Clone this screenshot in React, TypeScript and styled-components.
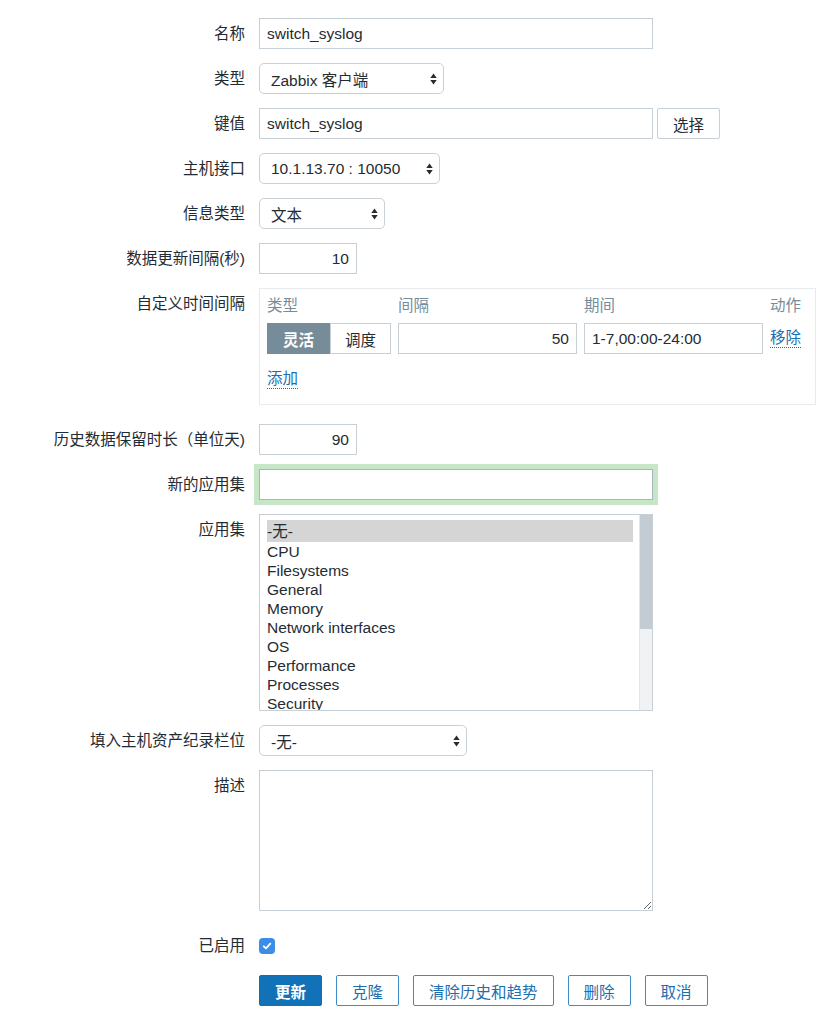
import React from 'react';
import styled, { createGlobalStyle } from 'styled-components';

const GlobalStyle = createGlobalStyle`
  html, body {
    margin: 0;
    padding: 0;
    background: #ffffff;
  }
  body {
    font-family: 'Liberation Sans', Arial, 'Noto Sans CJK SC', sans-serif;
    font-size: 15.5px;
    color: #1f2c33;
  }
  * {
    box-sizing: border-box;
  }
`;

const Form = styled.div`
  display: grid;
  grid-template-columns: 245px 1fr;
  column-gap: 14px;
  row-gap: 14px;
  align-items: start;
  padding-top: 18px;
`;

const Label = styled.div<{ $shift?: number }>`
  text-align: right;
  line-height: 31px;
  white-space: nowrap;
  margin-top: ${({ $shift }) => $shift ?? 0}px;
`;

const Field = styled.div<{ $shift?: number }>`
  display: flex;
  align-items: center;
  gap: 4px;
  min-height: 31px;
  margin-top: ${({ $shift }) => $shift ?? 0}px;
`;

const TextInput = styled.input<{ $width: number; $right?: boolean; $focus?: boolean }>`
  width: ${({ $width }) => $width}px;
  height: 31px;
  padding: 0 7px;
  border: 1px solid ${({ $focus }) => ($focus ? '#a9b6bf' : '#c6d0d6')};
  border-radius: 0;
  background: #ffffff;
  font: inherit;
  color: #1f2c33;
  text-align: ${({ $right }) => ($right ? 'right' : 'left')};
  outline: none;
  box-shadow: ${({ $focus }) => ($focus ? '0 0 0 5px #c7e5c7' : 'none')};
`;

const SelectBox = styled.div<{ $width: number }>`
  display: flex;
  align-items: center;
  justify-content: space-between;
  width: ${({ $width }) => $width}px;
  height: 31px;
  padding: 0 6px 0 11px;
  border: 1px solid #c9d1d6;
  border-radius: 5px;
  background: #ffffff;
  white-space: nowrap;
`;

const Button = styled.button<{ $primary?: boolean }>`
  height: 31px;
  padding: 0 15px;
  border: 1px solid ${({ $primary }) => ($primary ? '#0f70b7' : '#3d8cc8')};
  border-radius: 2px;
  background: ${({ $primary }) => ($primary ? '#1172b8' : '#ffffff')};
  color: ${({ $primary }) => ($primary ? '#ffffff' : '#1c6fae')};
  font: inherit;
  font-weight: ${({ $primary }) => ($primary ? 700 : 400)};
  white-space: nowrap;
  cursor: pointer;
`;

const PlainButton = styled.button`
  height: 31px;
  padding: 0 15px;
  border: 1px solid #c6d0d6;
  border-radius: 2px;
  background: #ffffff;
  color: #1f2c33;
  font: inherit;
  white-space: nowrap;
`;

const IntervalBox = styled.div`
  width: 557px;
  padding: 8px 7px 15px 7px;
  border: 1px solid #e7ebee;
  margin-bottom: 5px;
`;

const IntervalGrid = styled.div`
  display: grid;
  grid-template-columns: 124px 179px 179px auto;
  column-gap: 7px;
  row-gap: 8px;
  align-items: center;
`;

const HeadCell = styled.div`
  line-height: 18px;
  color: #768d99;
  white-space: nowrap;
`;

const Toggle = styled.div`
  display: flex;
  height: 31px;
`;

const ToggleItem = styled.div<{ $active?: boolean; $width: number }>`
  display: flex;
  align-items: center;
  justify-content: center;
  width: ${({ $width }) => $width}px;
  border: 1px solid ${({ $active }) => ($active ? '#768d99' : '#c6d0d6')};
  background: ${({ $active }) => ($active ? '#768d99' : '#ffffff')};
  color: ${({ $active }) => ($active ? '#ffffff' : '#1f2c33')};
  font-weight: ${({ $active }) => ($active ? 700 : 400)};
`;

const DottedLink = styled.a`
  display: inline-block;
  line-height: 18px;
  color: #1c6fae;
  text-decoration: none;
  border-bottom: 1px dotted #1c6fae;
  white-space: nowrap;
  justify-self: start;
`;

const AddRow = styled.div`
  margin-top: 16px;
`;

const ListBox = styled.div`
  display: flex;
  width: 394px;
  height: 197px;
  border: 1px solid #c6d0d6;
  background: #ffffff;
  overflow: hidden;
`;

const ListItems = styled.div`
  flex: 1;
  padding: 5px 6px 0 7px;
`;

const ListItem = styled.div<{ $selected?: boolean }>`
  line-height: 19px;
  padding: ${({ $selected }) => ($selected ? '2px 0 1px' : '0')};
  background: ${({ $selected }) => ($selected ? '#d5d5d5' : 'transparent')};
  white-space: nowrap;
`;

const ScrollTrack = styled.div`
  width: 13px;
  background: #f0f2f3;
  border-left: 1px solid #e2e6e8;
`;

const ScrollThumb = styled.div`
  height: 114px;
  background: #c3ccd2;
`;

const TextArea = styled.textarea`
  width: 394px;
  height: 141px;
  border: 1px solid #c6d0d6;
  border-radius: 0;
  font: inherit;
  resize: both;
  outline: none;
`;

const CheckBox = styled.span`
  display: inline-flex;
  align-items: center;
  justify-content: center;
  width: 16px;
  height: 16px;
  border-radius: 4px;
  background: #3a8ee8;
`;

const ButtonRow = styled.div`
  grid-column: 2;
  display: flex;
  gap: 14px;
`;

const Arrows = () => (
  <svg width="7" height="12" viewBox="0 0 7 12">
    <path d="M0.3 5 L3.5 0.6 L6.7 5 Z" fill="#2b2b2b" />
    <path d="M0.3 7 L3.5 11.4 L6.7 7 Z" fill="#2b2b2b" />
  </svg>
);

const Select = ({ width, value }: { width: number; value: string }) => (
  <SelectBox $width={width}>
    <span>{value}</span>
    <Arrows />
  </SelectBox>
);

const applications = [
  'CPU',
  'Filesystems',
  'General',
  'Memory',
  'Network interfaces',
  'OS',
  'Performance',
  'Processes',
  'Security',
];

export default function App() {
  return (
    <>
      <GlobalStyle />
      <Form>
        <Label>名称</Label>
        <Field>
          <TextInput $width={394} defaultValue="switch_syslog" />
        </Field>

        <Label>类型</Label>
        <Field>
          <Select width={185} value="Zabbix 客户端" />
        </Field>

        <Label>键值</Label>
        <Field>
          <TextInput $width={394} defaultValue="switch_syslog" />
          <PlainButton>选择</PlainButton>
        </Field>

        <Label>主机接口</Label>
        <Field>
          <Select width={181} value="10.1.13.70 : 10050" />
        </Field>

        <Label>信息类型</Label>
        <Field>
          <Select width={126} value="文本" />
        </Field>

        <Label>数据更新间隔(秒)</Label>
        <Field>
          <TextInput $width={98} $right defaultValue="10" />
        </Field>

        <Label>自定义时间间隔</Label>
        <Field>
          <IntervalBox>
            <IntervalGrid>
              <HeadCell>类型</HeadCell>
              <HeadCell>间隔</HeadCell>
              <HeadCell>期间</HeadCell>
              <HeadCell>动作</HeadCell>

              <Toggle>
                <ToggleItem $active $width={63}>
                  灵活
                </ToggleItem>
                <ToggleItem $width={61}>调度</ToggleItem>
              </Toggle>
              <TextInput $width={179} $right defaultValue="50" />
              <TextInput $width={179} defaultValue="1-7,00:00-24:00" />
              <DottedLink href="#">移除</DottedLink>
            </IntervalGrid>
            <AddRow>
              <DottedLink href="#">添加</DottedLink>
            </AddRow>
          </IntervalBox>
        </Field>

        <Label>历史数据保留时长（单位天)</Label>
        <Field>
          <TextInput $width={98} $right defaultValue="90" />
        </Field>

        <Label>新的应用集</Label>
        <Field>
          <TextInput $width={394} $focus defaultValue="" />
        </Field>

        <Label>应用集</Label>
        <Field>
          <ListBox>
            <ListItems>
              <ListItem $selected>-无-</ListItem>
              {applications.map((name) => (
                <ListItem key={name}>{name}</ListItem>
              ))}
            </ListItems>
            <ScrollTrack>
              <ScrollThumb />
            </ScrollTrack>
          </ListBox>
        </Field>

        <Label>填入主机资产纪录栏位</Label>
        <Field>
          <Select width={208} value="-无-" />
        </Field>

        <Label>描述</Label>
        <Field>
          <TextArea />
        </Field>

        <Label $shift={5}>已启用</Label>
        <Field $shift={5}>
          <CheckBox>
            <svg width="10" height="10" viewBox="0 0 10 10">
              <path
                d="M1.8 5.3 L4 7.4 L8.3 2.6"
                fill="none"
                stroke="#ffffff"
                strokeWidth="1.8"
                strokeLinecap="round"
                strokeLinejoin="round"
              />
            </svg>
          </CheckBox>
        </Field>

        <ButtonRow>
          <Button $primary>更新</Button>
          <Button>克隆</Button>
          <Button>清除历史和趋势</Button>
          <Button>删除</Button>
          <Button>取消</Button>
        </ButtonRow>
      </Form>
    </>
  );
}
